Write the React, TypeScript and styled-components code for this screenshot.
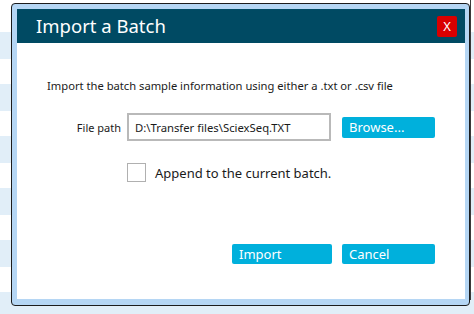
import React from "react";
import styled, { createGlobalStyle } from "styled-components";

const stripe = "#e1eef8";

const GlobalStyle = createGlobalStyle`
  html, body {
    margin: 0;
    padding: 0;
  }
  body {
    width: 474px;
    height: 314px;
    overflow: hidden;
    font-family: "Noto Sans", "Open Sans", sans-serif;
    background:
      linear-gradient(to right, transparent 470px, #3a3a3a 470px, #3a3a3a 471px, transparent 471px) 0 0 / 100% 300px no-repeat,
      linear-gradient(
        to bottom,
        #ffffff 0 32px,
        ${stripe} 32px 59px,
        #ffffff 59px 84px,
        ${stripe} 84px 111px,
        #ffffff 111px 136px,
        ${stripe} 136px 163px,
        #ffffff 163px 188px,
        ${stripe} 188px 215px,
        #ffffff 215px 240px,
        ${stripe} 240px 267px,
        #ffffff 267px 292px,
        ${stripe} 292px 320px
      );
  }
`;

const Page = styled.div`
  padding: 3px 0 0 11px;
`;

const Window = styled.div`
  box-sizing: border-box;
  width: 459px;
  height: 303px;
  border: 1px solid #1c1c1c;
  border-radius: 4px;
  background: #b5d6f4;
  padding: 5px 4px 6px 5px;
  display: flex;
  flex-direction: column;
`;

const TitleBar = styled.div`
  height: 34px;
  flex: none;
  background: #004a63;
  display: flex;
  align-items: center;
  justify-content: space-between;
  padding: 0 8px 0 19px;
`;

const Title = styled.div`
  color: #ffffff;
  font-size: 18.5px;
  line-height: 24px;
  margin-top: -1px;
`;

const CloseButton = styled.button`
  width: 20px;
  height: 21px;
  border: none;
  border-radius: 2px;
  background: #d90000;
  color: #ffffff;
  font-family: "Noto Sans", sans-serif;
  font-size: 13px;
  line-height: 21px;
  padding: 0;
  margin-top: 1px;
  display: flex;
  align-items: center;
  justify-content: center;
`;

const Body = styled.div`
  flex: 1;
  background: #ffffff;
  padding: 35px 30px 0 30px;
  display: flex;
  flex-direction: column;
`;

const Description = styled.div`
  color: #1a1a1a;
  font-size: 11.2px;
  line-height: 16px;
`;

const FieldRow = styled.div`
  display: flex;
  align-items: center;
  margin-top: 19px;
`;

const FieldLabel = styled.label`
  width: 74px;
  margin-right: 6px;
  text-align: right;
  color: #1a1a1a;
  font-size: 11px;
`;

const PathInput = styled.div`
  box-sizing: border-box;
  width: 204px;
  height: 28px;
  border: 2px solid #b9b9b9;
  padding: 0 0 0 6px;
  display: flex;
  align-items: center;
  color: #1a1a1a;
  font-size: 11.3px;
`;

const ActionButton = styled.button<{ $w: number; $h: number }>`
  box-sizing: border-box;
  width: ${(p) => p.$w}px;
  height: ${(p) => p.$h}px;
  border: none;
  border-radius: 2px;
  background: #00b0dc;
  color: #ffffff;
  font-family: "Noto Sans", sans-serif;
  font-size: 13px;
  text-align: left;
  padding: 0 0 0 7px;
  display: flex;
  align-items: center;
`;

const CheckRow = styled.div`
  display: flex;
  align-items: center;
  margin-top: 22px;
  margin-left: 80px;
`;

const CheckBox = styled.span`
  box-sizing: border-box;
  width: 19px;
  height: 19px;
  border: 1px solid #b0b0b0;
  background: #ffffff;
  margin-right: 9px;
`;

const CheckLabel = styled.span`
  color: #1a1a1a;
  font-size: 13px;
`;

const ButtonRow = styled.div`
  display: flex;
  justify-content: flex-end;
  gap: 10px;
  margin-top: 62px;
`;

export default function App() {
  return (
    <>
      <GlobalStyle />
      <Page>
        <Window>
          <TitleBar>
            <Title>Import a Batch</Title>
            <CloseButton>X</CloseButton>
          </TitleBar>
          <Body>
            <Description>
              Import the batch sample information using either a .txt or .csv file
            </Description>
            <FieldRow>
              <FieldLabel>File path</FieldLabel>
              <PathInput>D:\Transfer files\SciexSeq.TXT</PathInput>
              <ActionButton $w={93} $h={21} style={{ marginLeft: 11 }}>
                Browse...
              </ActionButton>
            </FieldRow>
            <CheckRow>
              <CheckBox />
              <CheckLabel>Append to the current batch.</CheckLabel>
            </CheckRow>
            <ButtonRow>
              <ActionButton $w={100} $h={20}>Import</ActionButton>
              <ActionButton $w={93} $h={20}>Cancel</ActionButton>
            </ButtonRow>
          </Body>
        </Window>
      </Page>
    </>
  );
}
